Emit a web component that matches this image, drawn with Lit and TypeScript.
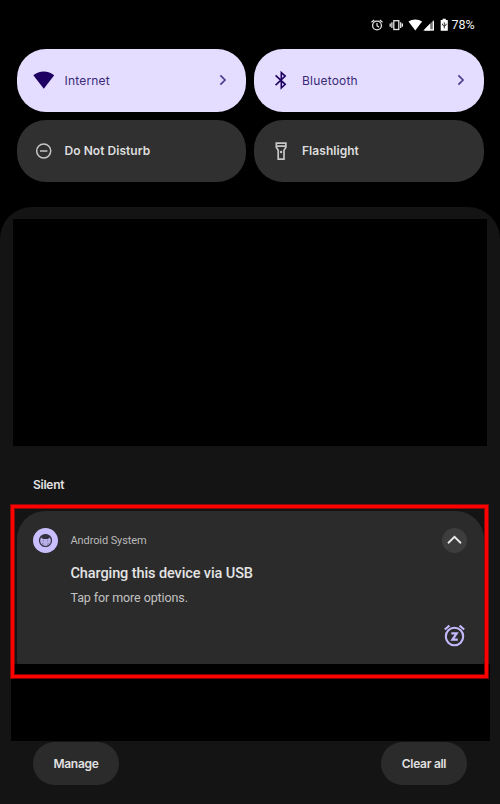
import { LitElement, html, css, svg } from "lit";
import { customElement, property } from "lit/decorators.js";

const chevron = html`<svg width="8" height="12" viewBox="0 0 8 12" fill="none"><path d="M1.4 1.4 6 6 1.4 10.6" stroke="#4a3d8f" stroke-width="1.7"/></svg>`;

const glyphs: Record<string, unknown> = {
  wifi: svg`<path d="M1.300 7.300C7 2.100 16.500 2.100 22.200 7.300L11.800 20.700Z" fill="#1d0061"/>`,
  bluetooth: svg`<path d="M6.600 7.300 16.200 16.300 12.300 20V4.600L16.200 8.100 6.600 17.100" fill="none" stroke="#1d0061" stroke-width="1.600"/>`,
  dnd: svg`<circle cx="11.700" cy="12" r="7" fill="none" stroke="#c6c6c6" stroke-width="1.500"/><path d="M8 12H15.400" stroke="#c6c6c6" stroke-width="1.500"/>`,
  torch: svg`<path d="M7.300 4.200H16.900V8.200L15 11.200V20.200H9.200V11.200L7.300 8.200ZM7.300 7.200H16.900" fill="none" stroke="#c6c6c6" stroke-width="1.700"/><circle cx="12.100" cy="13" r="1.200" fill="#c6c6c6"/>`,
};

@customElement("quick-tile")
export class QuickTile extends LitElement {
  @property() label = "";
  @property() icon = "wifi";
  @property({ type: Boolean, reflect: true }) active = false;
  @property({ type: Boolean }) more = false;

  static styles = css`
    :host {
      display: flex;
      align-items: center;
      box-sizing: border-box;
      height: 62.500px;
      padding: 0 19px 0 17px;
      border-radius: 29px;
      background: #303030;
      color: #dedede;
      font: 600 12px/16px Inter, sans-serif;
      letter-spacing: 0.050px;
    }
    :host([active]) {
      background: #e4ddff;
      color: #3a2a78;
      font-weight: 400;
      letter-spacing: 0.200px;
    }
    .icon { width: 20px; height: 20px; overflow: visible; flex: none; }
    .label { margin-left: 11px; flex: 1; white-space: nowrap; }
    :host([active]) .label { padding-top: 1.500px; }
    svg { display: block; }
  `;

  render() {
    return html`
      <svg class="icon" viewBox="2 2 20 20">${glyphs[this.icon]}</svg>
      <span class="label">${this.label}</span>
      ${this.more ? chevron : ""}
    `;
  }
}

@customElement("app-root")
export class AppRoot extends LitElement {
  static styles = css`
    :host {
      display: block;
      position: relative;
      box-sizing: border-box;
      width: 500px;
      height: 804px;
      overflow: hidden;
      background: #000;
      color: #e2e2e2;
      font-family: Inter, sans-serif;
    }
    svg { display: block; flex: none; }
    .status {
      display: flex;
      align-items: center;
      justify-content: flex-end;
      height: 49px;
      box-sizing: border-box;
      padding-right: 25px;
    }
    .indicators { width: 82px; height: 16px; }
    .pct {
      width: 23.500px;
      margin-left: 3px;
      font: 400 12.500px/16px Roboto, sans-serif;
      color: #f2f2f2;
      white-space: nowrap;
    }
    .tiles {
      display: grid;
      grid-template-columns: 1fr 1fr;
      gap: 8px;
      padding: 0 16.500px;
    }
    .shade {
      display: flex;
      flex-direction: column;
      box-sizing: border-box;
      height: 598px;
      margin-top: 24.500px;
      padding-top: 12.500px;
      border-radius: 32px 32px 0 0;
      background: #141414;
    }
    .blank { height: 227px; margin: 0 13px; background: #000; }
    .section {
      margin: 29px 0 0 33px;
      height: 36px;
      font: 600 12px/20px Inter, sans-serif;
      letter-spacing: -0.250px;
    }
    .card {
      display: grid;
      grid-template-columns: 25px 1fr 25px;
      column-gap: 12.500px;
      box-sizing: border-box;
      height: 153px;
      margin: 0 16.500px;
      padding: 17px 16.500px 0;
      border-radius: 28px 28px 2px 2px;
      background: #2b2b2b;
    }
    .body { display: flex; flex-direction: column; white-space: nowrap; }
    .app { margin-top: 1px; font: 400 11px/24px Roboto, sans-serif; letter-spacing: -0.100px; color: #b9b9b9; }
    .title { margin-top: 11px; font: 500 14.500px/20px Roboto, sans-serif; letter-spacing: -0.100px; color: #e4e4e4; }
    .text { margin-top: 4px; font: 400 12.500px/20px Roboto, sans-serif; letter-spacing: -0.100px; color: #c2c2c2; }
    .side { display: flex; flex-direction: column; gap: 70px; align-items: center; }
    .under { height: 77px; margin: 0 10px 0 11px; background: #000; flex: none; }
    .actions { display: flex; justify-content: space-between; padding: 1px 33px 0; }
    .pill {
      width: 86px;
      height: 43px;
      border: 0;
      padding: 0;
      border-radius: 22px;
      background: #2b2b2b;
      color: #e0e0e0;
      font: 600 12px/43px Inter, sans-serif;
      letter-spacing: -0.300px;
    }
    .highlight {
      position: absolute;
      left: 11px;
      top: 505px;
      box-sizing: border-box;
      width: 477px;
      height: 173px;
      border: 3px solid #f00;
      box-shadow: 0 0 0 1px rgba(255, 0, 0, 0.5), inset 0 0 0 1px rgba(255, 0, 0, 0.5);
    }
  `;

  render() {
    return html`
      <div class="status">
        <svg class="indicators" viewBox="367 16.500 82 16" fill="none" stroke="#e4e4e4">
          <circle cx="377" cy="25" r="4.400" stroke-width="1.300"/>
          <path d="M377 22.500V25.300L379 26.700M371.500 21.800 374.200 19.500M382.500 21.800 379.800 19.500" stroke-width="1.200"/>
          <rect x="393.800" y="20.200" width="5" height="8.800" stroke-width="1.300"/>
          <path d="M391.900 21.700V27.500M400.700 21.700V27.500M390.200 23V26.200M402.400 23V26.200" stroke-width="1.300"/>
          <path d="M408.500 21.100C412.300 18.300 418.300 18.300 422.100 21.100L415.300 30Z" fill="#fff" stroke="none"/>
          <path d="M423.400 30 434 19.200V30Z" fill="#777" stroke="none"/>
          <path d="M423.400 30 430.200 23V30Z" fill="#fff" stroke="none"/>
          <path d="M433.400 20.700V29.400H425" stroke="#fff" stroke-width="1.200"/>
          <path d="M440.700 19.500H442.600V18.200H445.800V19.500H447.800V30.200H440.700Z" fill="#fff" stroke="none"/>
          <path d="M444.300 21.800V28M442.500 23.200V24.500L444.300 25.700 446.100 24.500V23.200" stroke="#222" stroke-width="0.900"/>
        </svg>
        <span class="pct">78%</span>
      </div>
      <div class="tiles">
        <quick-tile active more icon="wifi" label="Internet"></quick-tile>
        <quick-tile active more icon="bluetooth" label="Bluetooth"></quick-tile>
        <quick-tile icon="dnd" label="Do Not Disturb"></quick-tile>
        <quick-tile icon="torch" label="Flashlight"></quick-tile>
      </div>
      <div class="shade">
        <div class="blank"></div>
        <div class="section">Silent</div>
        <div class="card">
          <svg width="25" height="25" viewBox="0 0 25 25">
            <circle cx="12.500" cy="12.500" r="12.500" fill="#c9bfff"/>
            <circle cx="12.500" cy="12.500" r="6" fill="#b9afe8" stroke="#34303f" stroke-width="1.200"/>
            <path d="M6.900 11C7.600 7.800 9.800 6.500 12.500 6.500S17.400 7.800 18.100 11L16.600 9.400 15 11H10L8.400 9.400Z" fill="#34303f"/>
            <path d="M9.300 15.300 10.800 16.300M14.200 16.300 15.700 15.300M10 12.800H11M14 12.800H15" fill="none" stroke="#6c638f" stroke-width="0.800"/>
          </svg>
          <div class="body">
            <span class="app">Android System</span>
            <span class="title">Charging this device via USB</span>
            <span class="text">Tap for more options.</span>
          </div>
          <div class="side">
            <svg width="25" height="25" viewBox="0 0 25 25" fill="none">
              <circle cx="12.500" cy="12.500" r="12.500" fill="#3d3d3d"/>
              <path d="M6 15.300 12.500 8.900 19 15.300" stroke="#e8e8e8" stroke-width="1.900"/>
            </svg>
            <svg width="22" height="24" viewBox="0.500 0 22 24" fill="none" stroke="#c3b8fb" stroke-width="2.100">
              <circle cx="11" cy="13.500" r="8.700"/>
              <path d="M1.300 6.500 5.900 2.600M20.700 6.500 16.100 2.600"/>
              <path d="M7.800 10.400H13.200L8.900 16.600H14.300" stroke-width="2.200"/>
            </svg>
          </div>
        </div>
        <div class="under"></div>
        <div class="actions">
          <button class="pill">Manage</button>
          <button class="pill">Clear all</button>
        </div>
      </div>
      <div class="highlight"></div>
    `;
  }
}
